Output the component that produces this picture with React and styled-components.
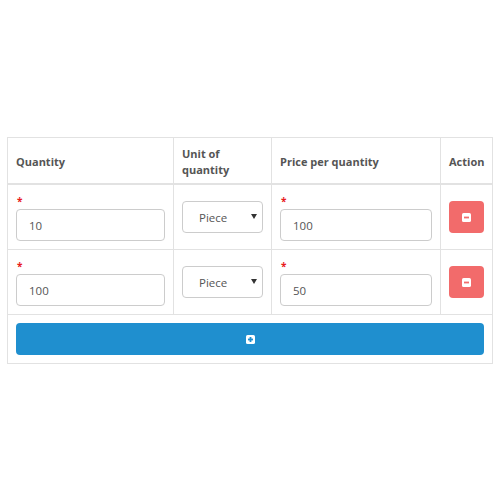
import React from "react";
import styled, { createGlobalStyle } from "styled-components";

const Global = createGlobalStyle`
  html, body { margin: 0; padding: 0; background: #fff; }
  body { font-family: "Open Sans", "Liberation Sans", sans-serif; color: #555; }
  * { box-sizing: border-box; }
`;

const Wrap = styled.div`
  padding: 137px 8px 0 7px;
`;

const Table = styled.table`
  width: 485px;
  border-collapse: collapse;
  table-layout: fixed;
  border: 1px solid #e2e2e2;
`;

const Th = styled.th`
  width: ${(p) => p.$w}px;
  text-align: left;
  font-size: 11px;
  font-weight: 700;
  line-height: 16px;
  color: #555;
  padding: 8px 8px 5px;
  border: 1px solid #e2e2e2;
  border-bottom: 2px solid #e2e2e2;
  vertical-align: middle;
`;

const Td = styled.td`
  padding: 8px;
  border: 1px solid #e2e2e2;
  vertical-align: middle;
`;

const Required = styled.div`
  height: 16px;
  line-height: 16px;
  font-size: 10px;
  font-weight: 700;
  color: #e81c1c;
  padding-left: 1px;
`;

const Input = styled.input`
  display: block;
  width: 100%;
  height: 32px;
  padding: 6px 12px;
  border: 1px solid #ccc;
  border-radius: 4px;
  font-family: "Open Sans", "Liberation Sans", sans-serif;
  font-size: 11.5px;
  color: #555;
  background: #fff;
  outline: none;
`;

const SelectBox = styled.div`
  position: relative;
  width: 100%;
`;

const Select = styled.select`
  appearance: none;
  -webkit-appearance: none;
  display: block;
  width: 100%;
  height: 32px;
  padding: 0 12px 0 16px;
  border: 1px solid #ccc;
  border-radius: 4px;
  background: #fff;
  font-family: "Open Sans", "Liberation Sans", sans-serif;
  font-size: 11.5px;
  color: #555;
  outline: none;
`;

const Caret = styled.span`
  position: absolute;
  right: 6px;
  top: 13px;
  width: 0;
  height: 0;
  border-left: 3.5px solid transparent;
  border-right: 3.5px solid transparent;
  border-top: 5px solid #333;
  pointer-events: none;
`;

const IconButton = styled.button`
  display: flex;
  align-items: center;
  justify-content: center;
  width: ${(p) => (p.$full ? "100%" : "35px")};
  height: 32px;
  border: none;
  border-radius: 4px;
  background: ${(p) => p.$bg};
  padding: 0;
  cursor: pointer;
`;

const MinusSquare = ({ color }) => (
  <svg width="9" height="9" viewBox="0 0 9 9">
    <rect x="0" y="0" width="9" height="9" rx="1.6" fill="#fff" />
    <rect x="2" y="3.6" width="5" height="1.8" fill={color} />
  </svg>
);

const PlusSquare = ({ color }) => (
  <svg width="9" height="9" viewBox="0 0 9 9">
    <rect x="0" y="0" width="9" height="9" rx="1.6" fill="#fff" />
    <rect x="2" y="3.6" width="5" height="1.8" fill={color} />
    <rect x="3.6" y="2" width="1.8" height="5" fill={color} />
  </svg>
);

const RED = "#f26b6b";
const BLUE = "#1f8fcf";

const rows = [
  { qty: "10", unit: "Piece", price: "100" },
  { qty: "100", unit: "Piece", price: "50" },
];

export default function App() {
  return (
    <>
      <Global />
      <Wrap>
        <Table>
          <thead>
            <tr>
              <Th $w={166}>Quantity</Th>
              <Th $w={98}>Unit of quantity</Th>
              <Th $w={169}>Price per quantity</Th>
              <Th $w={52}>Action</Th>
            </tr>
          </thead>
          <tbody>
            {rows.map((r, i) => (
              <tr key={i}>
                <Td>
                  <Required>*</Required>
                  <Input defaultValue={r.qty} />
                </Td>
                <Td>
                  <SelectBox>
                    <Select defaultValue={r.unit}>
                      <option>Piece</option>
                      <option>Kg</option>
                    </Select>
                    <Caret />
                  </SelectBox>
                </Td>
                <Td>
                  <Required>*</Required>
                  <Input defaultValue={r.price} />
                </Td>
                <Td>
                  <IconButton $bg={RED} aria-label="Remove">
                    <MinusSquare color={RED} />
                  </IconButton>
                </Td>
              </tr>
            ))}
            <tr>
              <Td colSpan={4}>
                <IconButton $full $bg={BLUE} aria-label="Add">
                  <PlusSquare color={BLUE} />
                </IconButton>
              </Td>
            </tr>
          </tbody>
        </Table>
      </Wrap>
    </>
  );
}
